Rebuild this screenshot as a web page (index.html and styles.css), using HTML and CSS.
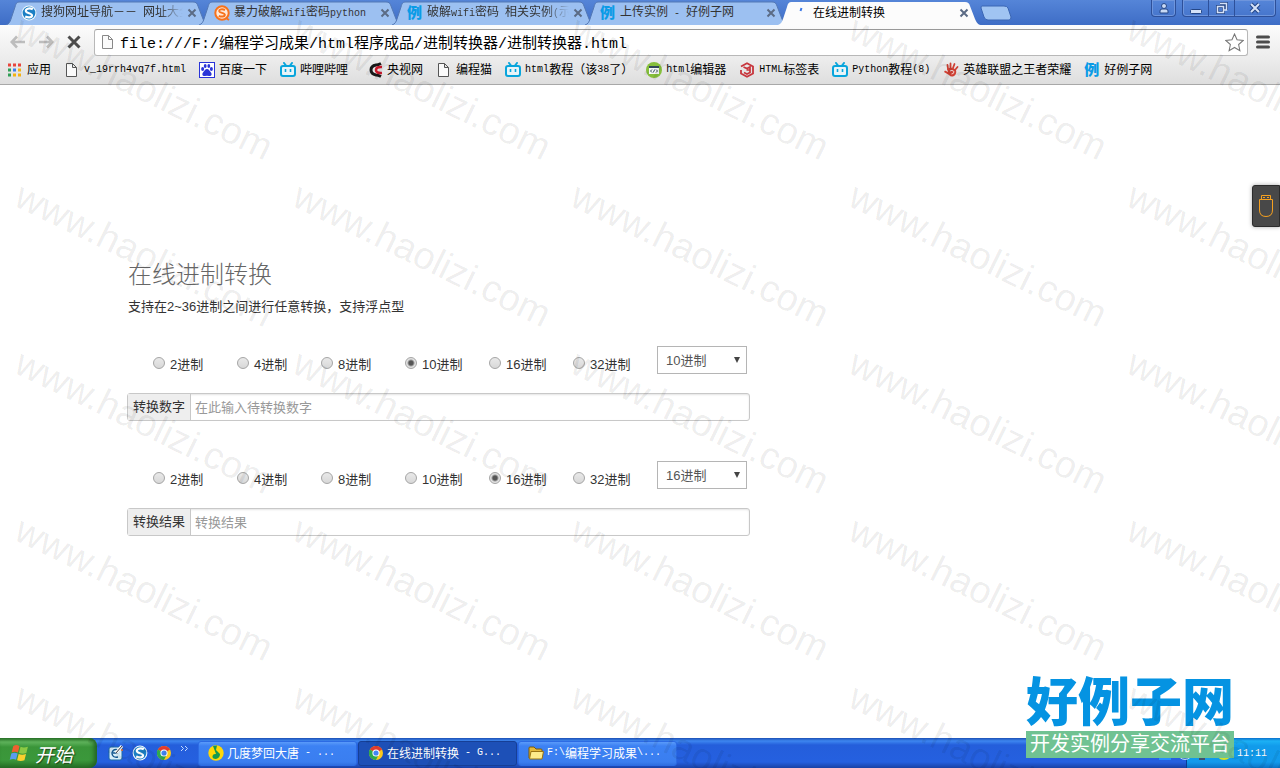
FILE: index.html
```html
<!DOCTYPE html>
<html lang="zh-CN">
<head>
    <meta charset="UTF-8">
    <meta name="viewport" content="width=device-width, initial-scale=1.0">
    <title>在线进制转换</title>
    <link rel="stylesheet" href="styles.css">
</head>
<body>
    <!-- shared shapes -->
    <svg class="defs" aria-hidden="true">
        <symbol id="tab-shape" viewBox="0 0 204 24" preserveAspectRatio="none">
            <path d="M0 24 C3 23 4 21 5 18 L9 6 C10 2 11 1 14 1 H187 C190 1 191 2 192 5 L197 18 C199 22 200 24 204 24"/>
        </symbol>
        <symbol id="close" viewBox="0 0 10 10">
            <path d="M1.5 1.5 L8.5 8.5 M8.5 1.5 L1.5 8.5" fill="none" stroke="currentColor" stroke-width="2"/>
        </symbol>
        <symbol id="page" viewBox="0 0 16 16">
            <path d="M2.5 1.5 H8.5 L12.5 5.5 V14.5 H2.5 Z M8.5 1.5 V5.5 H12.5" fill="#fafafa" stroke="currentColor"/>
        </symbol>
        <symbol id="bili" viewBox="0 0 16 16">
            <path d="M4 1 L6 3.5 M12 1 L10 3.5" stroke="#08a5dc" stroke-width="2" stroke-linecap="round"/>
            <rect x="1" y="4" width="14" height="10" rx="2" fill="#e8f4f8" stroke="#08a5dc" stroke-width="2"/>
            <path d="M5.5 7 V10 M10.5 7 V10" stroke="#08a5dc" stroke-width="1.6"/>
        </symbol>
        <symbol id="chrome" viewBox="0 0 16 16">
            <circle cx="8" cy="8" r="7" fill="#fbc91b"/>
            <path d="M8 8 L1.9 4.5 A7 7 0 0 1 14.1 4.5 Z" fill="#e33b2e"/>
            <path d="M8 8 L1.9 4.5 A7 7 0 0 0 8 15 L10 11 Z" fill="#2da94f"/>
            <circle cx="8" cy="8" r="3.6" fill="#fff"/>
            <circle cx="8" cy="8" r="2.6" fill="#4285f4"/>
        </symbol>
        <symbol id="sogou" viewBox="0 0 16 16">
            <circle cx="8" cy="8" r="7.4" fill="#f4fafd"/>
            <circle cx="8" cy="8" r="6.4" fill="#1b7fc4"/>
            <path d="M11.8 4.2 C8 2.2 4 4.3 5 6.5 C6 8.5 11 8 11 10.4 C11 12.6 7 13 4.2 11.6" fill="none" stroke="#fff" stroke-width="2.2"/>
        </symbol>
    </svg>

    <header class="browser">
        <div class="titlebar">
            <div class="tabs">
                <div class="tab">
                    <svg class="tab-bg"><use href="#tab-shape"/></svg>
                    <svg class="icon"><use href="#sogou"/></svg>
                    <a class="tab-title fade" href="#">搜狗网址导航－－<span class="latin"> </span>网址大全</a>
                    <button class="tab-close" aria-label="关闭"><svg><use href="#close"/></svg></button>
                </div>
                <div class="tab">
                    <svg class="tab-bg"><use href="#tab-shape"/></svg>
                    <svg class="icon" viewBox="0 0 16 16">
                        <circle cx="8" cy="8" r="6.7" fill="#ffe9d8" stroke="#f7721c" stroke-width="2"/>
                        <path d="M11 5 C8 3.5 5 4.5 5.2 6.2 C5.5 8.3 10.8 7.5 10.8 9.8 C10.8 12 7 12 4.8 10.8" fill="none" stroke="#f7721c" stroke-width="2"/>
                        <path d="M12 13 L15 15" stroke="#f7721c" stroke-width="2"/>
                    </svg>
                    <a class="tab-title" href="#">暴力破解<span class="latin">wifi</span>密码<span class="latin">python</span></a>
                    <button class="tab-close" aria-label="关闭"><svg><use href="#close"/></svg></button>
                </div>
                <div class="tab">
                    <svg class="tab-bg"><use href="#tab-shape"/></svg>
                    <span class="icon li">例</span>
                    <a class="tab-title fade" href="#">破解<span class="latin">wifi</span>密码<span class="latin"> </span>相关实例<span class="latin">(</span>示</a>
                    <button class="tab-close" aria-label="关闭"><svg><use href="#close"/></svg></button>
                </div>
                <div class="tab">
                    <svg class="tab-bg"><use href="#tab-shape"/></svg>
                    <span class="icon li">例</span>
                    <a class="tab-title" href="#">上传实例<span class="latin"> - </span>好例子网</a>
                    <button class="tab-close" aria-label="关闭"><svg><use href="#close"/></svg></button>
                </div>
                <div class="tab active">
                    <svg class="tab-bg"><use href="#tab-shape"/></svg>
                    <svg class="icon" viewBox="0 0 16 16"><path d="M8.5 3 L7.5 6" stroke="#3b78e7" stroke-width="2"/></svg>
                    <a class="tab-title" href="#">在线进制转换</a>
                    <button class="tab-close" aria-label="关闭"><svg><use href="#close"/></svg></button>
                </div>
                <button class="new-tab" aria-label="新标签页">
                    <svg viewBox="0 0 32 16"><path d="M2 1 H24 Q27 1 28 3 L31 12 Q31 15 29 15 H8 Q5 15 4 12 L1 3 Q1 1 2 1" fill="#a0c4f2" stroke="#3b66b4"/></svg>
                </button>
            </div>
            <div class="window-buttons">
                <button class="user" aria-label="用户">
                    <svg viewBox="0 0 12 12"><path d="M2 11 V9 Q2 7 4 7 H8 Q10 7 10 9 V11 Z" fill="#c9daf5" stroke="#244687"/><circle cx="6" cy="4" r="2.5" fill="#c9daf5" stroke="#244687"/></svg>
                </button>
                <div class="button-group">
                    <button aria-label="最小化"><svg viewBox="0 0 12 12"><rect x="0.5" y="7.5" width="11" height="4" rx="1" fill="#d5e2f8" stroke="#244687"/></svg></button>
                    <button aria-label="还原"><svg viewBox="0 0 12 12"><path d="M4 1.5 H10.5 V8 M1.5 4.5 H7.5 V10.5 H1.5 Z" fill="none" stroke="#244687" stroke-width="3"/><path d="M4 1.5 H10.5 V8 H8 M1.5 4.5 H7.5 V10.5 H1.5 Z" fill="none" stroke="#d5e2f8" stroke-width="1.5"/></svg></button>
                    <button class="last" aria-label="关闭窗口"><svg viewBox="0 0 12 12"><path d="M2 2 L10 10 M10 2 L2 10" stroke="#244687" stroke-width="4"/><path d="M2 2 L10 10 M10 2 L2 10" stroke="#d5e2f8" stroke-width="2"/></svg></button>
                </div>
            </div>
        </div>

        <div class="toolbar">
            <button class="nav off" aria-label="后退"><svg viewBox="0 0 16 16"><path d="M15 8 H2 M7 2.5 L1.8 8 L7 13.5" fill="none" stroke="currentColor" stroke-width="2.6"/></svg></button>
            <button class="nav off" aria-label="前进"><svg viewBox="0 0 16 16"><path d="M1 8 H14 M9 2.5 L14.2 8 L9 13.5" fill="none" stroke="currentColor" stroke-width="2.6"/></svg></button>
            <button class="nav" aria-label="停止"><svg viewBox="0 0 16 16"><path d="M2.5 2.5 L13.5 13.5 M13.5 2.5 L2.5 13.5" stroke="currentColor" stroke-width="3"/></svg></button>
            <div class="omnibox">
                <svg class="icon" viewBox="0 0 16 16"><use href="#page"/></svg>
                <input type="text" aria-label="地址栏" value="file:///F:/编程学习成果/html程序成品/进制转换器/进制转换器.html">
                <button class="star" aria-label="收藏"><svg viewBox="0 0 18 18"><path d="M9 1 L11.4 6.4 L17.3 7 L12.9 10.9 L14.1 16.7 L9 13.7 L3.9 16.7 L5.1 10.9 L0.7 7 L6.6 6.4 Z" fill="#fff" stroke="#777"/></svg></button>
            </div>
            <button class="nav menu" aria-label="菜单"><svg viewBox="0 0 16 16"><path d="M2.5 3 H13.5 M2.5 8 H13.5 M2.5 13 H13.5" stroke="currentColor" stroke-width="3" stroke-linecap="round"/></svg></button>
        </div>

        <nav class="bookmarks">
            <a href="#">
                <svg class="icon" viewBox="0 0 16 16">
                    <path d="M1 3h3M6 3h3M11 3h3" stroke="#e8453c" stroke-width="3"/>
                    <path d="M1 8h3M1 13h3" stroke="#2f9e55" stroke-width="3"/>
                    <path d="M6 8h3" stroke="#3b7ded" stroke-width="3"/>
                    <path d="M11 8h3M6 13h3M11 13h3" stroke="#f3b212" stroke-width="3"/>
                </svg>应用</a>
            <a href="#"><svg class="icon"><use href="#page"/></svg><span class="latin">v_19rrh4vq7f.html</span></a>
            <a href="#">
                <svg class="icon" viewBox="0 0 16 16">
                    <rect x="0.5" y="0.5" width="15" height="15" fill="#fff" stroke="#2a34d8"/>
                    <g fill="#2a34d8"><ellipse cx="3.6" cy="7" rx="1.5" ry="2"/><ellipse cx="6.2" cy="4" rx="1.4" ry="2"/><ellipse cx="9.8" cy="4" rx="1.4" ry="2"/><ellipse cx="12.4" cy="7" rx="1.5" ry="2"/><path d="M8 7 C10 7 10.5 9 12 10.5 C13.5 12.5 12 14.5 10 14 Q8 13.5 6 14 C4 14.5 2.5 12.5 4 10.5 C5.5 9 6 7 8 7"/></g>
                </svg>百度一下</a>
            <a class="wide" href="#"><svg class="icon"><use href="#bili"/></svg>哔哩哔哩</a>
            <a href="#">
                <svg class="icon" viewBox="0 0 16 16">
                    <path d="M14 1.500 Q11 3 9 3 Q4 4 4 8 Q4 12 9 13 Q11 13 14 14.500" fill="none" stroke="#181818" stroke-width="3"/>
                    <path d="M15 5 Q9 4.500 9 8 Q9 11.500 15 11" fill="none" stroke="#c9182b" stroke-width="2.600"/>
                </svg>央视网</a>
            <a href="#"><svg class="icon"><use href="#page"/></svg>编程猫</a>
            <a href="#"><svg class="icon"><use href="#bili"/></svg><span class="latin">html</span>教程（该<span class="latin">38</span>了）</a>
            <a href="#">
                <svg class="icon" viewBox="0 0 16 16">
                    <circle cx="8" cy="8" r="8" fill="#86bf3c"/>
                    <rect x="3" y="4" width="10" height="8" fill="#f5f8f8"/>
                    <path d="M3 5 H13" stroke="#32495b" stroke-width="2"/>
                    <path d="M6 7.5 L4.5 9 L6 10.5 M10 7.5 L11.5 9 L10 10.5 M8.7 7.5 L7.3 10.5" fill="none" stroke="#32495b"/>
                </svg><span class="latin">html</span>编辑器</a>
            <a href="#">
                <svg class="icon" viewBox="0 0 16 16">
                    <path d="M2 4.5 L8 1.3 L14 4.5 V11.5 L8 14.7 L2 11.5 V8" fill="none" stroke="#c7353c" stroke-width="1.8"/>
                    <path d="M4.5 5 L8 6.5 L11 5 V8 L7.5 8 M11 8 V10.5 L8 12 L5 10.5" fill="none" stroke="#c7353c" stroke-width="1.7"/>
                </svg><span class="latin">HTML</span>标签表</a>
            <a href="#"><svg class="icon"><use href="#bili"/></svg><span class="latin">Python</span>教程<span class="latin">(8)</span></a>
            <a href="#">
                <svg class="icon" viewBox="0 0 16 16">
                    <path d="M5 7 L4.5 3 M7.5 6 L7.5 1.5 M10 6 L11.5 2 M12 8 L14.5 5" stroke="#cf4034" stroke-width="1.8" stroke-linecap="round"/>
                    <path d="M4 7 Q9 4 13 8 Q14 12 11 14 Q8 15.5 6 13 L1 10 L2 8.5 L5 10 Z" fill="#cf4034"/>
                    <path d="M7 9 Q9 7.5 11 9.5 Q11 12 8.5 12" fill="none" stroke="#f1d5d1"/>
                </svg>英雄联盟之王者荣耀</a>
            <a href="#"><span class="icon li">例</span>好例子网</a>
        </nav>
    </header>

    <main class="page">
        <h1>在线进制转换</h1>
        <p class="intro">支持在2~36进制之间进行任意转换，支持浮点型</p>

        <form class="converter">
            <div class="radix-row">
                <label><input type="radio" name="from" value="2">2进制</label>
                <label><input type="radio" name="from" value="4">4进制</label>
                <label><input type="radio" name="from" value="8">8进制</label>
                <label><input type="radio" name="from" value="10" checked>10进制</label>
                <label><input type="radio" name="from" value="16">16进制</label>
                <label><input type="radio" name="from" value="32">32进制</label>
                <div class="select">
                    <select aria-label="原进制">
                        <option>10进制</option>
                    </select>
                </div>
            </div>
            <div class="field">
                <label for="number">转换数字</label>
                <input type="text" id="number" placeholder="在此输入待转换数字">
            </div>

            <div class="radix-row">
                <label><input type="radio" name="to" value="2">2进制</label>
                <label><input type="radio" name="to" value="4">4进制</label>
                <label><input type="radio" name="to" value="8">8进制</label>
                <label><input type="radio" name="to" value="10">10进制</label>
                <label><input type="radio" name="to" value="16" checked>16进制</label>
                <label><input type="radio" name="to" value="32">32进制</label>
                <div class="select">
                    <select aria-label="目标进制">
                        <option>16进制</option>
                    </select>
                </div>
            </div>
            <div class="field">
                <label for="result">转换结果</label>
                <input type="text" id="result" placeholder="转换结果">
            </div>
        </form>

        <button class="usb" aria-label="USB">
            <svg viewBox="0 0 16 24"><path d="M3.5 5.5 V1.5 H12.5 V5.5 M1.5 5.5 H14.5 V16 Q14.5 22.5 8 22.5 Q1.5 22.5 1.5 16 Z M5 3.5 H7 M9 3.5 H11" fill="none" stroke="#f5a020"/></svg>
        </button>
    </main>

    <footer class="taskbar">
        <button class="start">
            <svg viewBox="0 0 20 20">
                <path d="M4 3 Q7 1 10 3 L8.5 9 Q5.5 7.5 2.5 9 Z" fill="#ee6030"/>
                <path d="M11 3.5 Q14 5 18 3.5 L16.5 9.5 Q13 11 9.5 9.5 Z" fill="#8cc944"/>
                <path d="M2.2 10 Q5 8.5 8.2 10 L6.7 16 Q4 14.5 0.7 16 Z" fill="#5a9cf0"/>
                <path d="M9.2 10.5 Q12.5 12 16.2 10.5 L14.7 16.5 Q11 18 7.7 16.5 Z" fill="#fbd02e"/>
            </svg>开始</button>
        <div class="quick">
            <button aria-label="显示桌面"><svg class="icon" viewBox="0 0 16 16"><rect x="1" y="2" width="13" height="13" rx="2" fill="#d9effa" stroke="#1d6aa5"/><path d="M11 5 Q5 3 4 8 Q4 13 10 12 M5 8 H10" fill="none" stroke="#14578f" stroke-width="1.5"/><path d="M8 8 L14 1" stroke="#fff" stroke-width="3"/><path d="M8 8 L14 1" stroke="#3a404c"/><circle cx="14" cy="5" r="1" fill="#ef6a25"/></svg></button>
            <button aria-label="搜狗"><svg class="icon"><use href="#sogou"/></svg></button>
            <button aria-label="Chrome"><svg class="icon"><use href="#chrome"/></svg></button>
            <button class="more" aria-label="更多"><svg viewBox="0 0 9 7"><path d="M1 1 L3.5 3.5 L1 6 M5 1 L7.5 3.5 L5 6" fill="none" stroke="#c4dcff"/></svg></button>
        </div>
        <div class="tasks">
            <button>
                <svg class="icon" viewBox="0 0 16 16"><circle cx="8" cy="8" r="7.7" fill="#fdd808"/><path d="M5 1 L9 0.500 L8 5 L12 9 Q12 13 8 14 Q4 14 4.500 11 Q5 8.500 8 9 Z" fill="#149a4e"/></svg>
                几度梦回大唐<span class="latin"> - ...</span></button>
            <button class="current"><svg class="icon"><use href="#chrome"/></svg>在线进制转换<span class="latin"> - G...</span></button>
            <button>
                <svg class="icon" viewBox="0 0 16 16"><path d="M1 13 V3 Q1 2 2 2 H6 L8 4 H13 Q14 4 14 5 V13 Z" fill="#e3b93c" stroke="#7a5a0a"/><path d="M3 6.5 H15.5 L14 14 H1.5 Z" fill="#fdeb8b" stroke="#9a7413"/></svg>
                <span class="latin">F:\</span>编程学习成果<span class="latin">\...</span></button>
        </div>
        <div class="tray">
            <span class="tray-dot speaker"></span>
            <span class="tray-dot globe"></span>
            <span class="tray-dot net"></span>
            <span class="tray-dot shield"></span>
            <time class="latin">11:11</time>
        </div>
    </footer>

    <div class="brand">
        <strong>好例子网</strong>
        <span>开发实例分享交流平台</span>
    </div>

    <div class="watermark" aria-hidden="true">
        <span>www.haolizi.com</span><span>www.haolizi.com</span><span>www.haolizi.com</span><span>www.haolizi.com</span><span>www.haolizi.com</span>
        <span>www.haolizi.com</span><span>www.haolizi.com</span><span>www.haolizi.com</span><span>www.haolizi.com</span><span>www.haolizi.com</span>
        <span>www.haolizi.com</span><span>www.haolizi.com</span><span>www.haolizi.com</span><span>www.haolizi.com</span><span>www.haolizi.com</span>
        <span>www.haolizi.com</span><span>www.haolizi.com</span><span>www.haolizi.com</span><span>www.haolizi.com</span><span>www.haolizi.com</span>
        <span>www.haolizi.com</span><span>www.haolizi.com</span><span>www.haolizi.com</span><span>www.haolizi.com</span><span>www.haolizi.com</span>
    </div>
</body>
</html>
```

FILE: styles.css
```css
* {
    box-sizing: border-box;
}

body {
    position: relative;
    display: flex;
    flex-direction: column;
    min-height: 100vh;
    margin: 0;
    overflow: hidden;
    background: #fff;
    color: #000;
    font-family: "Liberation Sans", "Noto Sans CJK SC", sans-serif;
    font-size: 12px;
}

button {
    padding: 0;
    border: 0;
    background: none;
    font: inherit;
    color: inherit;
}

a {
    color: inherit;
    text-decoration: none;
}

.defs {
    position: absolute;
    width: 0;
    height: 0;
}

.icon {
    flex: none;
    width: 16px;
    height: 16px;
}

.latin {
    font-family: "Liberation Mono", monospace;
    font-size: 10px;
    white-space: pre;
}

.li {
    color: #0a9be6;
    font-size: 15px;
    font-weight: 900;
    line-height: 16px;
}

/* tab strip */
.titlebar {
    display: flex;
    justify-content: space-between;
    height: 25px;
    padding: 0 4px 0 6px;
    background: linear-gradient(#5585d8, #3e6dc6);
}

.tabs {
    display: flex;
    align-items: flex-end;
}

.tab {
    position: relative;
    display: flex;
    align-items: center;
    gap: 4px;
    width: 204px;
    height: 25px;
    margin-right: -11px;
    padding: 0 13px 0 15px;
    color: #333;
}

.tab-bg {
    position: absolute;
    left: 0;
    top: 1px;
    width: 100%;
    height: 24px;
    fill: #9cc0f1;
    stroke: #5378b5;
}

.tab .icon,
.tab-title,
.tab-close {
    position: relative;
}

.tab-title {
    flex: 1;
    overflow: hidden;
    line-height: 18px;
    white-space: nowrap;
}

.fade {
    -webkit-mask-image: linear-gradient(to right, #000 118px, transparent 142px);
    mask-image: linear-gradient(to right, #000 118px, transparent 142px);
}

.tab-close {
    width: 10px;
    height: 10px;
    color: #5b6b85;
}

.tab-close svg {
    display: block;
    width: 10px;
    height: 10px;
}

.active {
    z-index: 1;
    color: #000;
}

.active .tab-bg {
    fill: #fcfcfc;
    stroke: none;
}

.new-tab {
    align-self: center;
    width: 32px;
    height: 16px;
    margin-left: 9px;
}

.new-tab svg {
    display: block;
}

.window-buttons {
    display: flex;
    gap: 6px;
    height: 17px;
}

.window-buttons svg {
    display: block;
    width: 12px;
    height: 12px;
    margin: 0 auto;
}

.user,
.button-group {
    border: 1px solid #2d509a;
    border-top: 0;
    border-radius: 0 0 4px 4px;
    box-shadow: inset 0 0 0 1px #6e95dc;
}

.user {
    width: 25px;
}

.button-group {
    display: flex;
}

.button-group button {
    width: 26px;
    border-right: 1px solid #2d509a;
}

.button-group .last {
    width: 40px;
    border-right: 0;
}

/* address bar */
.toolbar {
    display: flex;
    align-items: center;
    gap: 11px;
    height: 34px;
    padding: 0 8px 0 10px;
    background: linear-gradient(#fcfcfc, #ececec);
}

.nav {
    width: 17px;
    height: 16px;
    color: #4c4c4c;
}

.nav svg {
    display: block;
    width: 16px;
    height: 16px;
}

.off {
    color: #bdbdbd;
}

.omnibox {
    display: flex;
    flex: 1;
    align-items: center;
    gap: 4px;
    height: 27px;
    padding: 0 3px 0 5px;
    border: 1px solid #b8b8b8;
    border-top-color: #999;
    border-radius: 3px;
    background: #fff;
}

.omnibox .icon {
    color: #888;
}

.omnibox input {
    flex: 1;
    min-width: 0;
    padding: 0;
    border: 0;
    outline: 0;
    background: none;
    font-family: "Liberation Mono", "Noto Sans CJK SC", monospace;
    font-size: 15px;
}

.star {
    width: 19px;
    height: 18px;
}

.star svg {
    display: block;
}

.menu {
    margin-left: -4px;
}

/* bookmarks */
.bookmarks {
    display: flex;
    gap: 13px;
    height: 26px;
    padding: 0 7px 4px;
    overflow: hidden;
    border-bottom: 1px solid #a8a8a8;
    background: linear-gradient(#ececec, #dedede);
}

.bookmarks a {
    display: flex;
    flex: none;
    align-items: center;
    line-height: 18px;
}

.bookmarks .icon {
    margin-right: 4px;
    color: #555;
}

.bookmarks .li {
    color: #0a9be6;
}

.bookmarks .wide {
    padding-right: 6px;
}

/* converter page */
.page {
    position: relative;
    flex: 1;
    padding: 172px 10% 0;
    color: #333;
    font-size: 13px;
}

h1 {
    margin: 0;
    color: #666;
    font-size: 24px;
    font-weight: 300;
    line-height: 36px;
}

.intro {
    margin: 4px 0 29px;
    line-height: 20px;
}

.converter {
    max-width: 623px;
    margin-left: -1px;
}

.radix-row {
    display: flex;
    gap: 4px;
    height: 30px;
    padding-left: 26px;
}

.radix-row label {
    display: flex;
    align-items: center;
    gap: 5px;
    width: 80px;
    height: 34px;
    white-space: nowrap;
}

.radix-row input {
    appearance: none;
    width: 12px;
    height: 12px;
    margin: 0;
    border: 1px solid #a5a5a5;
    border-radius: 50%;
    background: linear-gradient(#e9e9e9, #d8d8d8);
}

.radix-row input:checked {
    background: radial-gradient(circle, #555 2px, #e2e2e2 4px);
}

.select {
    position: relative;
    width: 90px;
    height: 28px;
}

.select::after {
    content: "";
    position: absolute;
    top: 11px;
    right: 7px;
    border: 3px solid transparent;
    border-top: 6px solid #444;
    border-bottom: 0;
    pointer-events: none;
}

.select select {
    appearance: none;
    width: 100%;
    height: 100%;
    padding: 0 8px;
    border: 1px solid #b5b5b5;
    border-radius: 0;
    background: #fff;
    color: #555;
    font: inherit;
}

.field {
    display: flex;
    height: 28px;
    margin: 17px 0 40px;
    border: 1px solid #c8c8c8;
    border-radius: 3px;
    box-shadow: inset 0 1px 2px #e4e4e4;
}

.field label {
    padding: 0 5px;
    border-right: 1px solid #c8c8c8;
    background: #eee;
    line-height: 26px;
}

.field input {
    flex: 1;
    min-width: 0;
    padding: 0 4px;
    border: 0;
    outline: 0;
    background: none;
    font: inherit;
}

.field input::placeholder {
    color: #999;
}

.usb {
    position: absolute;
    top: 100px;
    right: 0;
    width: 28px;
    height: 42px;
    border: 1px solid #2c2c2c;
    border-radius: 3px 0 0 3px;
    background: #484848;
    box-shadow: 0 0 4px #aaa;
}

.usb svg {
    display: block;
    width: 16px;
    height: 24px;
    margin: 0 auto;
}

/* taskbar */
.taskbar {
    display: flex;
    height: 30px;
    background: linear-gradient(#1c50b5, #3d86f0 3px, #245edb 7px, #2560e0 24px, #1941a5);
    color: #fff;
}

.start {
    display: flex;
    align-items: center;
    gap: 5px;
    width: 97px;
    padding-left: 9px;
    border-radius: 0 8px 8px 0;
    background: linear-gradient(#2d7d2c, #5fb35c 4px, #3a9539 9px, #3b983b 22px, #266f25);
    box-shadow: inset -3px 0 4px #236423;
    font-size: 19px;
    font-style: italic;
    text-shadow: 1px 1px 1px #1c451b;
}

.start svg {
    width: 21px;
    height: 21px;
}

.quick {
    display: flex;
    align-items: center;
    gap: 8px;
    width: 101px;
    padding-left: 11px;
}

.quick button,
.quick svg {
    display: block;
}

.quick .more {
    align-self: flex-start;
    width: 9px;
    padding-top: 7px;
}

.tasks {
    display: flex;
    flex: 1;
    gap: 1px;
    padding: 3px 0 2px;
}

.tasks button {
    display: flex;
    align-items: center;
    width: 159px;
    padding: 0 0 2px 9px;
    border: 1px solid #2c6be4;
    border-radius: 3px;
    background: linear-gradient(#5a9bfa, #3c81f3 4px, #3a7ef0 20px, #3070e0);
    white-space: nowrap;
}

.tasks .icon {
    margin-right: 3px;
}

.tasks .current {
    border-color: #163f96;
    background: #1d50b7;
}

.tray {
    position: relative;
    display: flex;
    align-items: center;
    justify-content: flex-end;
    width: 94px;
    padding-right: 13px;
    border-left: 1px solid #0b3d94;
    background: linear-gradient(#0b70cc, #1cb1f5 3px, #119beb 8px, #129aec 24px, #0c72c5);
}

/* tray icons stick out below the brand banner */
.tray-dot {
    position: absolute;
    bottom: 8px;
    width: 16px;
    height: 16px;
}

.speaker {
    left: -28px;
    width: 12px;
    background: #258cff;
}

.globe {
    left: -10px;
    border: 1px solid #b8d7f2;
    border-radius: 50%;
    background: #3b76c8;
}

.net {
    left: 12px;
    width: 6px;
    background: #40506e;
}

.shield {
    left: 29px;
    border: 3px solid #d4df27;
    border-radius: 50%;
    background: #1fae68;
}

/* brand banner */
.brand {
    position: absolute;
    right: 46px;
    bottom: 10px;
    width: 208px;
    text-align: center;
}

.brand strong {
    display: block;
    color: #0593e2;
    font-size: 52px;
    font-weight: 900;
    line-height: 56px;
    white-space: nowrap;
}

.brand span {
    display: block;
    background: #70c292;
    color: #fff;
    font-size: 20px;
    line-height: 27px;
}

.watermark {
    position: absolute;
    inset: 0;
    display: grid;
    grid-template-columns: repeat(5, 278px);
    grid-auto-rows: 167px;
    align-content: start;
    padding: 4px 0 0 18px;
    overflow: hidden;
    color: rgba(0, 0, 0, 0.08);
    font-size: 38px;
    line-height: 44px;
    pointer-events: none;
    z-index: 2;
}

.watermark span {
    transform: rotate(26deg);
    transform-origin: 0 22px;
    white-space: nowrap;
}
```
